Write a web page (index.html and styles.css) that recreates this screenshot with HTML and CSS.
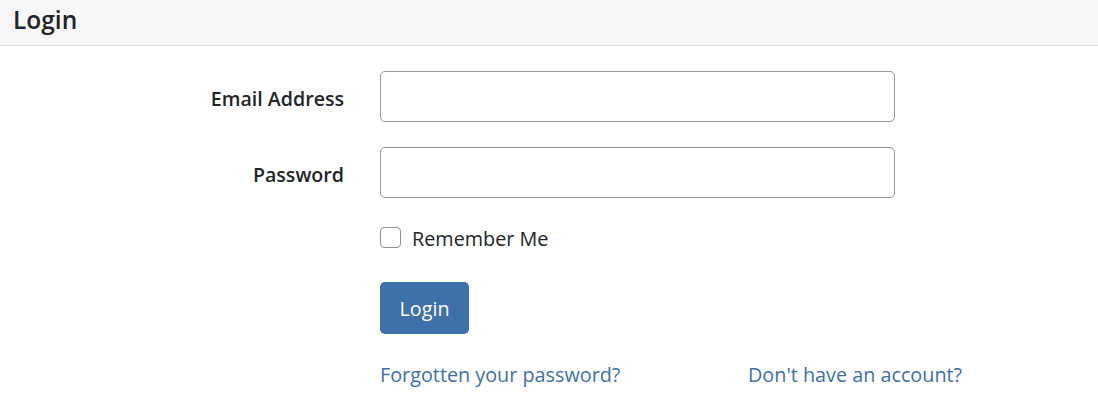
FILE: index.html
```html
<!DOCTYPE html>
<html>
<head>
<meta charset="utf-8">
<link rel="stylesheet" href="styles.css">
</head>
<body>
<div class="card-header">Login</div>
<form class="form">
  <div class="row">
    <label class="label" for="email">Email Address</label>
    <input class="input" id="email" type="email">
  </div>
  <div class="row">
    <label class="label" for="pw">Password</label>
    <input class="input" id="pw" type="password">
  </div>
  <div class="row check-row">
    <span class="label"></span>
    <label class="check"><span class="box"></span><span>Remember Me</span></label>
  </div>
  <div class="row btn-row">
    <span class="label"></span>
    <button class="btn" type="button">Login</button>
  </div>
  <div class="row links-row">
    <span class="label"></span>
    <div class="links">
      <a class="link" href="#">Forgotten your password?</a>
      <a class="link" href="#">Don't have an account?</a>
    </div>
  </div>
</form>
</body>
</html>
```
FILE: styles.css
```css
html, body {
  margin: 0;
  padding: 0;
  background: #fff;
  font-family: "Open Sans", "Noto Sans", sans-serif;
  color: #212529;
}
.card-header {
  background: #f7f7f7;
  border-bottom: 1px solid #dcdcdc;
  height: 46px;
  box-sizing: border-box;
  padding-left: 13px;
  font-size: 24.5px;
  font-weight: 600;
  line-height: 40px;
}
.form {
  padding-top: 25px;
}
.row {
  display: grid;
  grid-template-columns: 344px 514px;
  column-gap: 36px;
  align-items: center;
  margin-bottom: 25px;
}
.label {
  text-align: right;
  font-size: 19.6px;
  font-weight: 600;
  padding-top: 3px;
}
.input {
  box-sizing: border-box;
  height: 51px;
  width: 515px;
  border: 1px solid #999;
  border-radius: 5px;
  margin: 0;
}
.check-row {
  margin-bottom: 30px;
}
.check {
  display: flex;
  align-items: center;
  gap: 11px;
  font-size: 19.8px;
}
.check span:last-child {
  padding-top: 2px;
}
.box {
  box-sizing: border-box;
  width: 21px;
  height: 21px;
  border: 1px solid #8f8f8f;
  border-radius: 4px;
  background: #fff;
}
.btn {
  justify-self: start;
  box-sizing: border-box;
  width: 89px;
  height: 52px;
  border: none;
  border-radius: 5px;
  background: #3e70aa;
  color: #fff;
  font-family: inherit;
  font-size: 19.8px;
  padding: 0;
}
.btn-row {
  margin-bottom: 27px;
}
.links {
  display: flex;
}
.link {
  flex: none;
  color: #3f6fa8;
  text-decoration: none;
  font-size: 19.8px;
  width: 368px;
}
.link:last-child {
  width: auto;
}
```
